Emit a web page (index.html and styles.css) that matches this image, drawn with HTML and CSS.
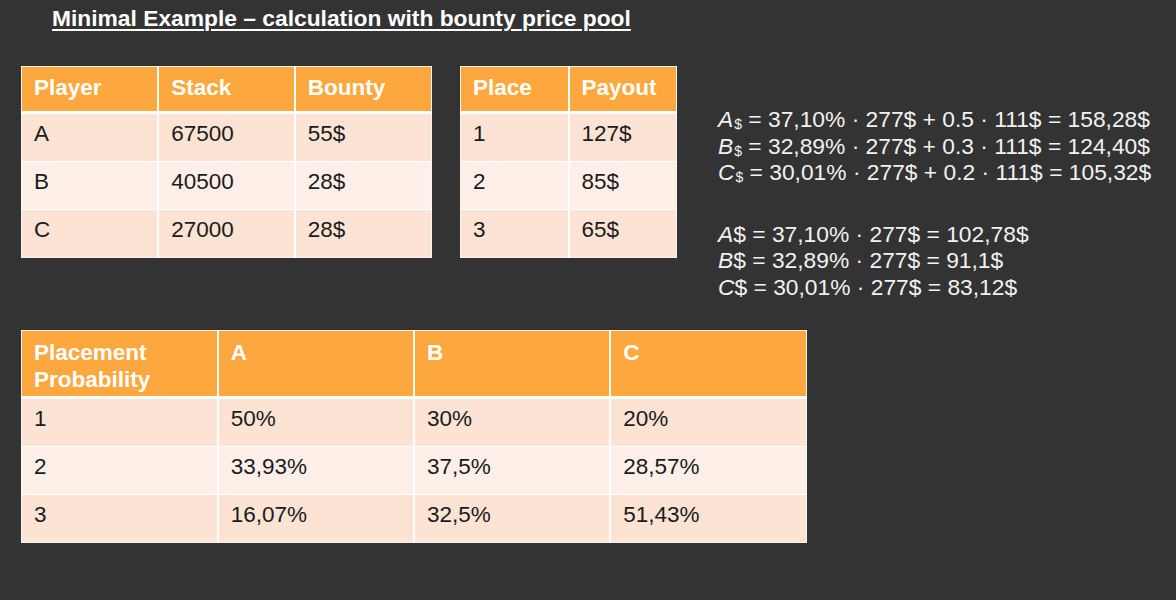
FILE: index.html
```html
<!DOCTYPE html>
<html lang="en">
<head>
<meta charset="utf-8">
<title>Minimal Example – calculation with bounty price pool</title>
<link rel="stylesheet" href="styles.css">
</head>
<body>
<main class="slide">
  <h1 class="title">Minimal Example – calculation with bounty price pool</h1>
  <div class="top">
    <table class="t t-players">
      <thead><tr><th>Player</th><th>Stack</th><th>Bounty</th></tr></thead>
      <tbody>
        <tr><td>A</td><td>67500</td><td>55$</td></tr>
        <tr><td>B</td><td>40500</td><td>28$</td></tr>
        <tr><td>C</td><td>27000</td><td>28$</td></tr>
      </tbody>
    </table>
    <table class="t t-payout">
      <thead><tr><th>Place</th><th>Payout</th></tr></thead>
      <tbody>
        <tr><td>1</td><td>127$</td></tr>
        <tr><td>2</td><td>85$</td></tr>
        <tr><td>3</td><td>65$</td></tr>
      </tbody>
    </table>
    <div class="formulas">
      <div class="block">
        <p><i>A</i><span class="sub">$</span> = 37,10% · 277$ + 0.5 · 111$ = 158,28$</p>
        <p><i>B</i><span class="sub">$</span> = 32,89% · 277$ + 0.3 · 111$ = 124,40$</p>
        <p><i>C</i><span class="sub">$</span> = 30,01% · 277$ + 0.2 · 111$ = 105,32$</p>
      </div>
      <div class="block">
        <p><i>A</i>$ = 37,10% · 277$ = 102,78$</p>
        <p><i>B</i>$ = 32,89% · 277$ = 91,1$</p>
        <p><i>C</i>$ = 30,01% · 277$ = 83,12$</p>
      </div>
    </div>
  </div>
  <table class="t t-prob">
    <thead><tr><th>Placement<br>Probability</th><th>A</th><th>B</th><th>C</th></tr></thead>
    <tbody>
      <tr><td>1</td><td>50%</td><td>30%</td><td>20%</td></tr>
      <tr><td>2</td><td>33,93%</td><td>37,5%</td><td>28,57%</td></tr>
      <tr><td>3</td><td>16,07%</td><td>32,5%</td><td>51,43%</td></tr>
    </tbody>
  </table>
</main>
</body>
</html>
```
FILE: styles.css
```css
html, body {
  margin: 0;
  padding: 0;
  background: #333333;
}
body {
  font-family: "Liberation Sans", Arial, sans-serif;
  width: 1176px;
  height: 600px;
  overflow: hidden;
}
.slide {
  padding: 5px 0 0 21px;
}
.title {
  margin: 0 0 0 31px;
  font-size: 22.8px;
  line-height: 26px;
  font-weight: bold;
  color: #ffffff;
  text-decoration: underline;
  text-decoration-thickness: 2px;
  text-underline-offset: 3px;
  height: 35px;
}
.top {
  display: flex;
  align-items: flex-start;
  margin-top: 26px;
}
.t {
  border-collapse: collapse;
  border: 1px solid #f4f4f4;
  font-size: 22.5px;
  line-height: 27px;
  color: #1b1b1b;
  table-layout: fixed;
}
.t th, .t td {
  text-align: left;
  vertical-align: top;
  padding: 7px 12px 0 12px;
  border-left: 2px solid #ffffff;
}
.t th:first-child, .t td:first-child {
  border-left: none;
}
.t th {
  background: #fda83e;
  color: #ffffff;
  font-weight: bold;
  height: 37px;
  border-bottom: 3px solid #ffffff;
}
.t td {
  height: 41px;
  padding-top: 6px;
  border-top: 1px solid #ffffff;
}
.t tbody tr:nth-child(odd) td {
  background: #fde3d3;
}
.t tbody tr:nth-child(even) td {
  background: #fef0e8;
}
.t-players {
  width: 411px;
}
.t-payout {
  width: 217px;
  margin-left: 28px;
}
.t-prob {
  width: 786px;
  margin-top: 30px;
}
.t-prob th {
  height: 57px;
  padding-top: 8px;
}
.formulas {
  margin-left: 41px;
  margin-top: 40px;
  color: #f2f2f2;
  font-size: 22.8px;
  line-height: 26.5px;
}
.formulas p {
  margin: 0;
  white-space: nowrap;
}
.formulas .block + .block {
  margin-top: 35px;
}
.formulas i {
  font-style: italic;
}
.formulas .sub {
  font-size: 14px;
  line-height: 0;
  position: relative;
  top: 2px;
  margin-left: 1px;
}
```
